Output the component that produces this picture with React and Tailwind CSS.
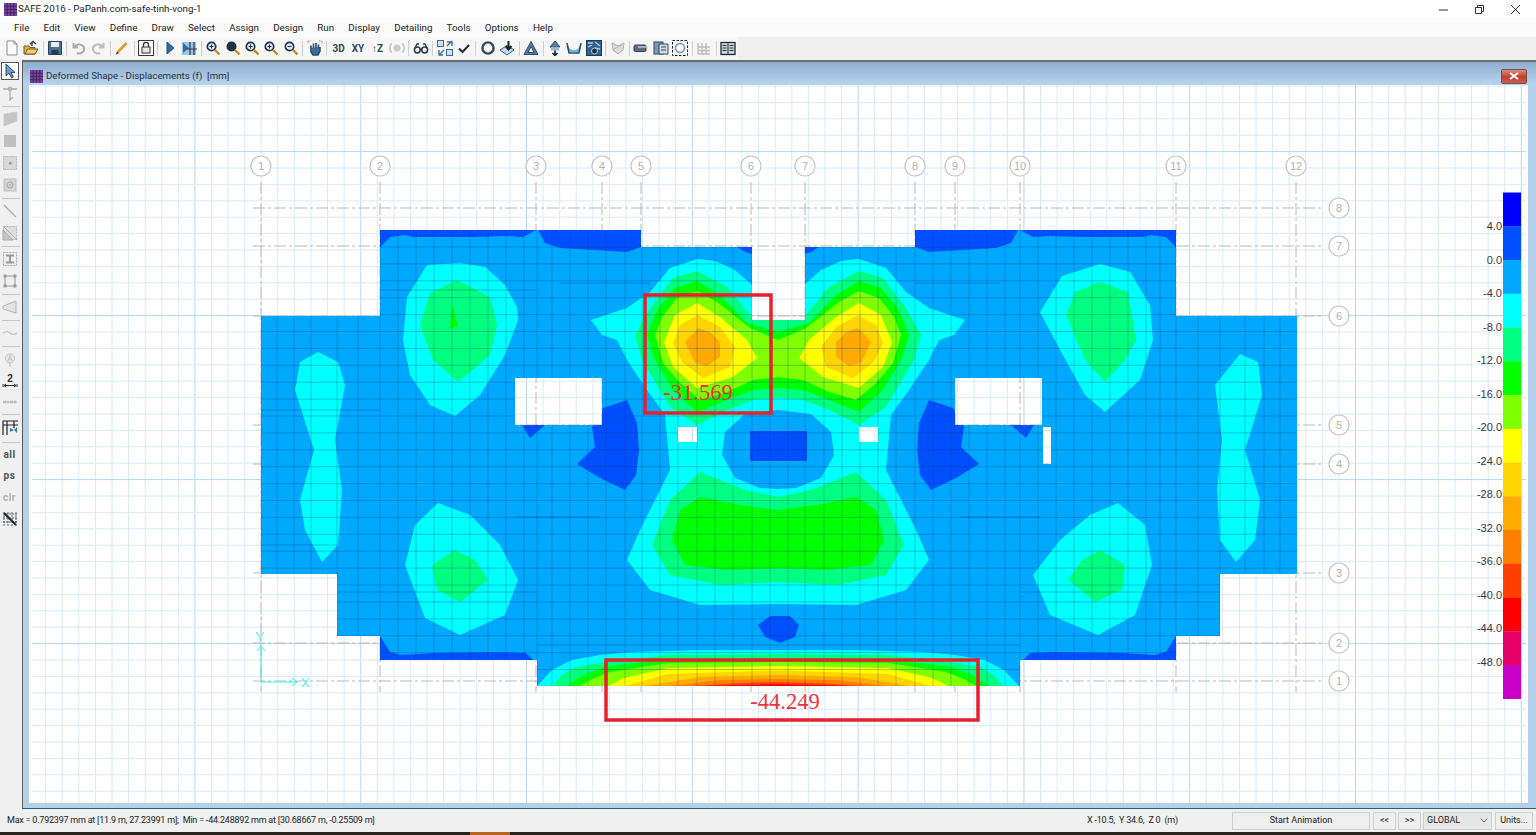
const uiFont = { fontFamily: "Roboto, 'Liberation Sans', sans-serif" };

const C = {
  blue: '#0050ff',
  slab: '#00a8ff',
  cyan: '#00ffff',
  mint: '#00ff80',
  green: '#00ff00',
  lime: '#80ff00',
  yellow: '#ffff00',
  gold: '#ffd500',
  amber: '#ffaa00',
  orange: '#ff8000',
  tomato: '#ff4000',
  red: '#ff0000',
};

const legendColors = ['#0000ff', '#0050ff', '#00a8ff', '#00ffff', '#00ff80', '#00ff00', '#80ff00', '#ffff00', '#ffd500', '#ffaa00', '#ff8000', '#ff4000', '#ff0000', '#e6006a', '#c800c8'];
const legendLabels = ['4.0', '0.0', '-4.0', '-8.0', '-12.0', '-16.0', '-20.0', '-24.0', '-28.0', '-32.0', '-36.0', '-40.0', '-44.0', '-48.0'];

const menus = ['File', 'Edit', 'View', 'Define', 'Draw', 'Select', 'Assign', 'Design', 'Run', 'Display', 'Detailing', 'Tools', 'Options', 'Help'];

const topBubbles = [['1', 261], ['2', 380], ['3', 536], ['4', 602], ['5', 641], ['6', 751], ['7', 805], ['8', 915], ['9', 955], ['10', 1020], ['11', 1176], ['12', 1296]];
const sideBubbles = [['8', 208], ['7', 246], ['6', 316], ['5', 425], ['4', 464], ['3', 573], ['2', 643], ['1', 681]];

const slabOutline = 'M380 230H641V247H752V320H805V247H915V230H1176V316H1297V574H1220V636H1176V660H1020V686H537V660H380V636H337V574H261V316H380Z';
const holes = 'M515 378H602V425H515ZM955 378H1042V425H955ZM678 427H697V442H678ZM859 427H878V442H859ZM1043 427H1051V464H1043Z';

// contours are drawn on the left half and mirrored around the slab centre
const mx = (pts) => pts.map(([x, y]) => [1556 - x, y]);
const str = (pts) => pts.map((p) => p.join(',')).join(' ');
const both = (pts) => str([...pts, ...mx(pts).reverse()]);

const butterfly = [[778, 300], [752, 285], [735, 270], [715, 261], [697, 259], [670, 268], [650, 292], [627, 308], [591, 320], [602, 335], [617, 340], [627, 360], [647, 390], [665, 415], [670, 470], [640, 530], [627, 560], [650, 590], [700, 605], [778, 604]];
const innerOval = [[778, 410], [745, 414], [725, 432], [722, 455], [735, 478], [760, 488], [778, 489]];
const upper = [
  [C.mint, [[778, 320], [752, 317], [727, 287], [697, 271], [673, 278], [650, 308], [635, 335], [642, 360], [670, 407], [697, 425], [727, 410], [753, 400], [778, 398]]],
  [C.green, [[778, 332], [747, 323], [720, 295], [697, 281], [675, 288], [657, 310], [647, 335], [655, 360], [673, 390], [697, 412], [727, 400], [753, 390], [778, 388]]],
  [C.lime, [[778, 340], [750, 328], [717, 302], [697, 291], [677, 298], [662, 317], [655, 335], [663, 363], [680, 383], [700, 400], [727, 392], [753, 380], [778, 377]]],
];
const yellowLobe = [[697, 303], [675, 315], [664, 342], [673, 367], [697, 388], [733, 377], [757, 358], [747, 340], [720, 317]];
const goldLobe = [[698, 315], [680, 325], [673, 343], [682, 362], [703, 378], [730, 367], [735, 347], [720, 327]];
const amberLobe = [[698, 328], [685, 342], [695, 363], [707, 366], [720, 357], [720, 342], [710, 332]];

const lower = [
  [C.mint, [[778, 497], [745, 490], [700, 472], [670, 500], [652, 545], [670, 575], [720, 585], [778, 582]]],
  [C.green, [[778, 510], [740, 505], [700, 497], [680, 510], [672, 540], [685, 565], [730, 570], [778, 568]]],
];

const arches = [
  [C.cyan, [[537, 686], [552, 670], [572, 660], [600, 655], [633, 652], [700, 650], [778, 650]]],
  [C.mint, [[553, 686], [562, 675], [576, 667], [604, 662], [668, 655], [778, 654]]],
  [C.green, [[567, 686], [582, 676], [604, 667], [668, 659], [778, 658]]],
  [C.lime, [[580, 686], [592, 679], [610, 672], [668, 663], [778, 662]]],
  [C.yellow, [[608, 686], [624, 678], [668, 668], [778, 666]]],
  [C.gold, [[625, 686], [668, 674], [778, 670.5]]],
  [C.amber, [[645, 686], [700, 677], [778, 675]]],
  [C.orange, [[668, 686], [720, 680], [778, 679]]],
  [C.tomato, [[690, 686], [740, 683], [778, 682]]],
  [C.red, [[705, 686], [760, 684.5], [778, 684]]],
];

const lobes = [
  // upper side lobes
  [C.cyan, [[427, 265], [460, 263], [485, 267], [505, 285], [517, 307], [518, 320], [505, 355], [480, 395], [455, 416], [430, 405], [410, 375], [403, 340], [407, 297]]],
  [C.mint, [[430, 293], [457, 280], [490, 297], [497, 325], [490, 355], [458, 382], [433, 360], [420, 325]]],
  [C.green, [[452, 305], [458, 326], [450, 329]]],
  [C.cyan, [[1062, 276], [1100, 264], [1130, 272], [1150, 305], [1153, 340], [1140, 380], [1105, 412], [1085, 395], [1060, 350], [1040, 312]]],
  [C.mint, [[1075, 292], [1100, 282], [1128, 292], [1136, 340], [1125, 360], [1105, 382], [1085, 360], [1066, 315]]],
  // edge strips
  [C.cyan, [[318, 352], [338, 362], [345, 385], [335, 440], [342, 490], [338, 545], [322, 562], [305, 530], [300, 500], [314, 450], [295, 390], [300, 362]]],
  [C.cyan, [[1240, 354], [1258, 362], [1262, 395], [1245, 450], [1260, 500], [1255, 540], [1236, 562], [1220, 540], [1217, 490], [1222, 440], [1215, 385]]],
  // lower side lobes
  [C.cyan, [[438, 503], [470, 515], [500, 545], [518, 580], [505, 615], [460, 635], [425, 618], [405, 565], [415, 525]]],
  [C.mint, [[455, 550], [475, 560], [488, 580], [460, 602], [437, 590], [432, 565]]],
  [C.cyan, [[1118, 503], [1145, 525], [1152, 565], [1135, 615], [1098, 635], [1050, 615], [1033, 575], [1060, 540], [1090, 515]]],
  [C.mint, [[1100, 550], [1125, 565], [1122, 590], [1095, 602], [1068, 580], [1082, 560]]],
];

const deepBlue = [
  [[758, 625], [770, 616], [790, 616], [799, 625], [795, 637], [780, 643], [765, 637]],
  [[750, 431], [807, 431], [807, 461], [750, 461]],
];

// these sit apart on each side, so each one is drawn twice instead of joined across the centre
const sidePatches = [
  [[603, 408], [627, 400], [637, 423], [639, 450], [636, 475], [625, 490], [600, 478], [577, 464], [595, 447], [592, 427]],
  [[522, 425], [545, 425], [530, 438]],
  [[380, 230], [536, 230], [523, 237], [507, 236], [473, 237], [413, 237], [405, 235], [390, 237], [380, 247]],
  [[538, 230], [641, 230], [641, 247], [627, 252], [560, 248], [545, 243]],
  [[737, 247], [752, 247], [752, 254], [745, 252]],
  [[380, 636], [380, 660], [533, 660], [526, 653], [504, 652], [433, 653], [401, 655], [390, 652]],
];

function range(from, to, step = 1) {
  const out = [];
  for (let v = from; v <= to; v += step) out.push(v);
  return out;
}

const gridX = range(0, 89).map((i) => 45.7 + i * 16.58);
const gridY = range(0, 43).map((i) => 86 + i * 16.4);
const meshX = [261, 277, 294, 311, 337, 358, 380, 398, 416, 434, 452, 470, 488, 506, 524, 537, 552, 570, 588, 606, 625, 642, 660, 678, 697, 715, 733, 752, 770, 788, 805, 824, 842, 860, 878, 896, 915, 933, 951, 969, 987, 1005, 1020, 1038, 1056, 1074, 1092, 1110, 1128, 1146, 1160, 1176, 1198, 1220, 1245, 1264, 1280];
const meshY = range(0, 26).map((i) => 247 + i * 16.9);
const meshStubs = [[380, 290, 536, 290], [560, 283, 650, 283], [915, 283, 1000, 283], [337, 592, 537, 592], [1020, 592, 1220, 592], [261, 545, 337, 545], [515, 517, 600, 517], [960, 517, 1040, 517], [537, 645, 1020, 645], [815, 240, 900, 240], [261, 410, 380, 410]];

function Plot() {
  return (
    <svg className="block" width="1499" height="718" viewBox="29 85 1499 718">
      <defs>
        <clipPath id="slab">
          <path d={`${slabOutline}${holes}`} clipRule="evenodd" />
        </clipPath>
      </defs>
      <rect x="29" y="85" width="1499" height="718" fill="#fff" />

      {gridX.map((x, i) => (
        <line key={x} x1={x} x2={x} y1="85" y2="803" stroke={i % 10 === 9 ? '#b4d6f8' : '#d8eafc'} />
      ))}
      {gridY.map((y, i) => (
        <line key={y} x1="32" x2="1526" y1={y} y2={y} stroke={i % 10 === 4 ? '#b4d6f8' : '#d8eafc'} />
      ))}

      {sideBubbles.map(([n, y]) => (
        <line key={n} x1="253" x2="1322" y1={y} y2={y} stroke="#b9b9b9" strokeDasharray="12 3 3 3" />
      ))}
      {topBubbles.map(([n, x]) => (
        <line key={n} x1={x} x2={x} y1="182" y2="692" stroke="#b9b9b9" strokeDasharray="12 3 3 3" />
      ))}

      <g clipPath="url(#slab)">
        <rect x="255" y="225" width="1050" height="465" fill={C.slab} />
        {sidePatches.map((p, i) => (
          <g key={i}>
            <polygon points={str(p)} fill={C.blue} />
            <polygon points={str(mx(p))} fill={C.blue} />
          </g>
        ))}
        {lobes.map(([c, p], i) => <polygon key={i} points={str(p)} fill={c} />)}
        {arches.map(([c, p]) => <polygon key={c} points={both(p)} fill={c} />)}
        <polygon points={both(butterfly)} fill={C.cyan} />
        <polygon points={both(innerOval)} fill={C.slab} />
        {lower.map(([c, p]) => <polygon key={c} points={both(p)} fill={c} />)}
        {upper.map(([c, p]) => <polygon key={c} points={both(p)} fill={c} />)}
        {[yellowLobe, mx(yellowLobe)].map((p, i) => <polygon key={i} points={str(p)} fill={C.yellow} />)}
        {[goldLobe, mx(goldLobe)].map((p, i) => <polygon key={i} points={str(p)} fill={C.gold} />)}
        {[amberLobe, mx(amberLobe)].map((p, i) => <polygon key={i} points={str(p)} fill={C.amber} />)}
        {deepBlue.map((p, i) => <polygon key={i} points={str(p)} fill={C.blue} />)}

        {meshX.map((x) => <line key={x} x1={x} x2={x} y1="225" y2="690" stroke="#00386e" strokeOpacity="0.28" />)}
        {meshY.map((y) => <line key={y} x1="255" x2="1305" y1={y} y2={y} stroke="#00386e" strokeOpacity="0.28" />)}
        {meshStubs.map(([a, b, c, d], i) => <line key={i} x1={a} y1={b} x2={c} y2={d} stroke="#00386e" strokeOpacity="0.3" />)}
      </g>

      {topBubbles.map(([n, x]) => (
        <g key={n}>
          <circle cx={x} cy="166" r="10" fill="#fff" stroke="#c4c4c4" strokeWidth="1.2" />
          <text x={x} y="170" textAnchor="middle" fontSize="11" fill="#b0b0b0" fontFamily="'Liberation Sans', sans-serif">{n}</text>
        </g>
      ))}
      {sideBubbles.map(([n, y]) => (
        <g key={n}>
          <circle cx="1339" cy={y} r="10" fill="#fff" stroke="#c4c4c4" strokeWidth="1.2" />
          <text x="1339" y={y + 4} textAnchor="middle" fontSize="11" fill="#b0b0b0" fontFamily="'Liberation Sans', sans-serif">{n}</text>
        </g>
      ))}

      {/* local axes */}
      <g stroke="#2ff2f2" fill="none" strokeWidth="1">
        <path d="M261 682H297M292 678L297 682L292 686M261 682V646M257 651L261 646L265 651" />
        <path d="M302 678L309 687M309 678L302 687M256 632L260 637L264 632M260 637V642" />
      </g>

      {/* legend */}
      {legendColors.map((c, i) => (
        <rect key={c} x="1503" y={192.5 + i * 33.75} width="18" height="34" fill={c} />
      ))}
      {legendLabels.map((l, i) => (
        <text key={l} x="1502" y={230 + i * 33.5} textAnchor="end" fontSize="11" fill="#3a3a3a" fontFamily="'Liberation Sans', sans-serif">{l}</text>
      ))}

      {/* annotations */}
      <rect x="645" y="295" width="126" height="118" fill="none" stroke="#e8202c" strokeWidth="3.5" />
      <rect x="606" y="660" width="372" height="60" fill="none" stroke="#e8202c" strokeWidth="3.5" />
      <text x="698" y="400" textAnchor="middle" fontSize="22.5" fill="#e6303a" fontFamily="'Liberation Serif', serif">-31.569</text>
      <text x="785" y="709" textAnchor="middle" fontSize="22.5" fill="#ee3340" fontFamily="'Liberation Serif', serif">-44.249</text>
    </svg>
  );
}

function GridLogo({ size = 14 }) {
  return (
    <svg width={size} height={size} viewBox="0 0 14 14" className="shrink-0">
      <rect width="14" height="14" fill="#7d3fa5" />
      <path d="M3.5 0V14M7 0V14M10.5 0V14M0 3.5H14M0 7H14M0 10.5H14" stroke="#3f2a58" strokeWidth="1" />
    </svg>
  );
}

const g = '#a9a9a9';
const dk = '#33485c';

function Mag({ c = '#1f3347', sign }) {
  return (
    <>
      <circle cx="6.5" cy="6.5" r="4.2" fill={sign === 'fill' ? '#1f3347' : '#e8f0f8'} stroke={c} strokeWidth="1.7" />
      <path d="M9.8 9.8L14.5 14.5" stroke="#c98a1e" strokeWidth="2.4" />
      {(sign === '+' || sign === 'z') && <path d="M4.5 6.5H8.5M6.5 4.5V8.5" stroke={c} strokeWidth="1.2" />}
      {sign === '-' && <path d="M4.5 6.5H8.5" stroke={c} strokeWidth="1.2" />}
    </>
  );
}

const toolIcons = {
  doc: <path d="M3 1H10L13 4V15H3Z M10 1V4H13" fill="#fbfbfb" stroke="#8a8f96" />,
  open: <><path d="M1 6H6L7 7.5H12V14H1Z" fill="#e2b24a" stroke="#7a5a1c" /><path d="M2 14L4.5 9H15L12 14Z" fill="#f4cf74" stroke="#7a5a1c" /><path d="M9 6V2.5M7 4L10 1.5L13 4" stroke="#27425c" strokeWidth="1.4" fill="none" /></>,
  save: <><path d="M1.5 1.5H14.5V14.5H1.5Z" fill="#4d7098" stroke="#27425c" /><rect x="4" y="2" width="8" height="5" fill="#e8edf3" /><rect x="4.5" y="10" width="7" height="4.5" fill="#24384e" /></>,
  undo: <path d="M4 6.5A5 4.5 0 1 1 6 13M2.5 3V7.5H7" fill="none" stroke={g} strokeWidth="2" />,
  redo: <path d="M12 6.5A5 4.5 0 1 0 10 13M13.5 3V7.5H9" fill="none" stroke="#bcbcbc" strokeWidth="2" />,
  pencil: <><path d="M3 13L12.5 3" stroke="#e49a22" strokeWidth="2.6" /><path d="M1.5 15L3.2 11.8L4.6 13.2Z" fill="#333" /></>,
  lock: <><rect x="0.5" y="0.5" width="15" height="15" fill="#f8f8f8" stroke="#3a3a3a" /><path d="M5.5 7V4.8A2.5 2.5 0 0 1 10.5 4.8V7" fill="none" stroke="#333" strokeWidth="1.3" /><rect x="4" y="7" width="8" height="6" fill="#e6e6e6" stroke="#333" /></>,
  play: <path d="M5 2L12 8L5 14Z" fill="#2f6e9e" stroke="#24507a" />,
  runall: <><rect x="1" y="2" width="14" height="13" fill="#9fc4e0" /><path d="M2 3L8 8L2 13Z" fill="#2f6e9e" /><path d="M9 2V15M13 2V15M6 9H16" stroke="#24384e" strokeWidth="1.2" /></>,
  z1: <Mag sign="z" />,
  z2: <Mag sign="fill" />,
  z3: <Mag sign="+" />,
  z4: <Mag sign="+" />,
  z5: <Mag sign="-" />,
  hand: <><path d="M4 9V5.5M6.5 8V3.5M9 8V3M11.5 8.5V4.5M4 8L4 12L6 15H11L13 11V7" fill="#3f6c96" stroke="#2c4d6e" strokeWidth="1.6" /><path d="M1 1H4M12 1H15M1 1V4M15 1V4" stroke="#999" strokeDasharray="1.5 1" /></>,
  orbit: <><circle cx="8" cy="8" r="3.5" fill="#ccc" /><path d="M2.5 3.5A7 7 0 0 0 2.5 12.5M13.5 3.5A7 7 0 0 1 13.5 12.5" fill="none" stroke="#bbb" strokeWidth="1.4" /></>,
  glasses: <><circle cx="4.3" cy="10" r="2.9" fill="none" stroke="#2c3a48" strokeWidth="1.5" /><circle cx="11.7" cy="10" r="2.9" fill="none" stroke="#2c3a48" strokeWidth="1.5" /><path d="M7 9.5H9M1.5 9L4 4H6M14.5 9L12 4H10" fill="none" stroke="#2c3a48" strokeWidth="1.3" /></>,
  arrows: <><rect x="0.5" y="0.5" width="6" height="6" fill="#cfe2f4" stroke="#3a6a98" /><rect x="9.5" y="9.5" width="6" height="6" fill="#cfe2f4" stroke="#3a6a98" /><path d="M10 6L15 1M7 10L2 15M10 2H15V6M2 10V15H6" fill="none" stroke="#3a6a98" strokeWidth="1.3" /></>,
  check: <path d="M3 8.5L6.5 12L13 5" fill="none" stroke="#1f2a36" strokeWidth="2" />,
  ring: <circle cx="8" cy="8" r="5.6" fill="none" stroke={dk} strokeWidth="2.4" />,
  drop: <><path d="M1 10L8 5.5L15 10L8 15Z" fill="#c2d8ec" stroke="#3f5f80" /><path d="M9.5 1V8M6.5 6L9.5 9.5L12.5 6" fill="none" stroke="#18222c" strokeWidth="2" /></>,
  tri: <path d="M8 1.5L15 14.5H1ZM8 6.5L11 12.5H5Z" fill="#517a9e" fillRule="evenodd" stroke="#2c4d6e" />,
  up: <><path d="M8 1L13 7H3Z" fill="#5e7f9e" stroke="#2c4d6e" /><rect x="4" y="7" width="8" height="3.5" fill="#9bb8d2" /><path d="M8 10.5V15M5.5 13L8 15.5L10.5 13" stroke="#18222c" strokeWidth="1.6" fill="none" /></>,
  bowl: <><path d="M2 5C4 12 12 12 14 5L14 12H2Z" fill="#66b6de" /><path d="M1 3L3 13H13L15 3" fill="none" stroke="#2c4d6e" strokeWidth="1.5" /></>,
  photo: <><rect x="0.5" y="0.5" width="15" height="15" fill="#33608a" stroke="#1e3b56" /><path d="M2 3H7M9 2L14 6M2 7L6 5M9 8L14 9" stroke="#a8d0ee" strokeWidth="1.3" /><circle cx="8.5" cy="11" r="3" fill="#163047" stroke="#a8d0ee" /></>,
  bowlg: <><path d="M2 3L8 6L14 3L13 10L8 14L3 10Z" fill="#dcdcdc" stroke="#b0b0b0" /><path d="M4 9L12 5" stroke="#b5b5b5" /></>,
  beam: <><rect x="1" y="5" width="12" height="6.5" rx="1.5" fill="#5d6f80" stroke="#2c3a48" /><path d="M5 7H15" stroke="#c6d4e0" strokeWidth="1.3" /></>,
  stack: <><rect x="1" y="2" width="9" height="12" fill="#7d97ad" stroke="#33485c" /><path d="M6 4H15V14H6Z" fill="#cfdce8" stroke="#33485c" /><path d="M8 7H13M8 10H13" stroke="#33485c" /></>,
  dots: <><rect x="0.5" y="0.5" width="15" height="15" fill="#fafafa" stroke="#222" strokeDasharray="2.5 1.5" /><circle cx="8" cy="8" r="4.5" fill="none" stroke="#6f97bd" strokeWidth="1.5" /></>,
  gridg: <path d="M2 3V14H14M6 3V14M10 3V14M2 7H14M2 10.5H14" fill="none" stroke="#bdbdbd" strokeWidth="1.4" />,
  book: <><rect x="1" y="2.5" width="14" height="12" fill="#cfd6dc" stroke="#1f2a36" strokeWidth="1.3" /><path d="M8 2.5V14.5M2.5 5.5H6.5M2.5 8H6.5M2.5 10.5H6.5M9.5 5.5H13.5M9.5 8H13.5M9.5 10.5H13.5" stroke="#1f2a36" /></>,
};

const toolbar = ['doc', 'open', '|', 'save', '|', 'undo', 'redo', '|', 'pencil', '|', 'lock', '|', 'play', 'runall', '|', 'z1', 'z2', 'z3', 'z4', 'z5', '|', 'hand', '|', '3D', 'XY', '↑Z', 'orbit', '|', 'glasses', '|', 'arrows', 'check', '|', 'ring', 'drop', '|', 'tri', '|', 'up', 'bowl', 'photo', '|', 'bowlg', '|', 'beam', 'stack', 'dots', '|', 'gridg', '|', 'book'];

const sideIcons = {
  arrow: <path d="M4 1V13L7 10L9.5 15L11.5 14L9 9.5H13Z" fill="#6f9cc4" stroke="#2c4d6e" />,
  node: <><circle cx="8" cy="4" r="2" fill="none" stroke="#aaa" /><path d="M1 4H15M8 6V15L11 12" stroke="#aaa" fill="none" strokeWidth="1.3" /></>,
  quad: <path d="M2 3L15 1V10L2 15Z" fill="#c4c4c4" stroke="#cfcfcf" />,
  square: <rect x="2" y="2" width="12" height="12" fill="#c0c0c0" />,
  dashdot: <><rect x="1.5" y="1.5" width="13" height="13" fill="#d8d8d8" stroke="#b5b5b5" strokeDasharray="2 1" /><rect x="7" y="7" width="2.5" height="2.5" fill="#999" /></>,
  sqcirc: <><rect x="2" y="2" width="12" height="12" fill="#d4d4d4" stroke="#c0c0c0" /><circle cx="8" cy="8" r="3" fill="none" stroke="#a5a5a5" /><circle cx="8" cy="8" r="0.8" fill="#999" /></>,
  diag: <path d="M2 2L14 14" stroke="#b0b0b0" strokeWidth="1.5" />,
  diagbox: <><rect x="1.5" y="1.5" width="13" height="13" fill="#dedede" stroke="#b5b5b5" strokeDasharray="2 1" /><path d="M1 5L11 15H1ZM2 2L15 15" fill="#c4c4c4" stroke="#aaa" /></>,
  ibeam: <><rect x="1.5" y="1.5" width="13" height="13" fill="#ededed" stroke="#aaa" strokeDasharray="2 1" /><path d="M4 3.5H12V5.5H9V10.5H12V12.5H4V10.5H7V5.5H4Z" fill="#999" /></>,
  nodes: <><rect x="3" y="3" width="10" height="10" fill="none" stroke="#aaa" strokeWidth="1.3" /><rect x="1.5" y="1.5" width="3" height="3" fill="#999" /><rect x="11.5" y="1.5" width="3" height="3" fill="#999" /><rect x="1.5" y="11.5" width="3" height="3" fill="#999" /><rect x="11.5" y="11.5" width="3" height="3" fill="#999" /></>,
  trap: <path d="M1 7L14 2V14L1 10Z" fill="#e2e2e2" stroke="#b5b5b5" />,
  wave: <path d="M1 8C4 6 6 6 8 8S12 10 15 8" fill="none" stroke="#c4c4c4" strokeWidth="1.3" />,
  circleA: <><circle cx="8" cy="6.5" r="4.5" fill="#e8e8e8" stroke="#c0c0c0" /><path d="M6 9L8 3.5L10 9M6.8 7.2H9.2M8 11V15" fill="none" stroke="#c0c0c0" /></>,
  dim: <><text x="8" y="8" textAnchor="middle" fontSize="10" fontWeight="700" fill="#333" fontFamily="'Liberation Sans', sans-serif">2</text><path d="M1 13V10M15 13V10M2 11.5H14M2 11.5L4 10M2 11.5L4 13M14 11.5L12 10M14 11.5L12 13" fill="none" stroke="#333" /></>,
  dash: <path d="M1 8H15" stroke="#bcbcbc" strokeWidth="2.5" strokeDasharray="3 .5" />,
  snap: <><path d="M1 15V1H16M5 1V15M12 1V8M1 5H16" fill="none" stroke="#222" strokeWidth="1.2" /><path d="M8 8L12 10L8 12ZM15 7V13L12 10Z" fill="#3a78ac" /></>,
  cross: <><path d="M2 1V15M6 1V15M10 1V15M14 1V15M1 3H15M1 7H15M1 11H15" stroke="#50606e" strokeDasharray="2 1" /><path d="M2 2L14 14" stroke="#222" strokeWidth="1.8" /></>,
};

const leftbar = [
  ['arrow', 22, true], ['node', 22], ['-', 4], ['quad', 22], ['square', 22], ['dashdot', 22], ['sqcirc', 22], ['-', 4], ['diag', 22], ['diagbox', 22], ['-', 4], ['ibeam', 22], ['nodes', 22], ['-', 4], ['trap', 22], ['-', 4], ['wave', 22], ['-', 4], ['circleA', 24], ['dim', 20], ['dash', 20], ['-', 4], ['snap', 24], ['-', 3], ['all', 21], ['ps', 21], ['clr', 22], ['cross', 22],
];

function LeftToolbar() {
  return (
    <div className="flex w-[22px] shrink-0 flex-col bg-[#f0f0f0]">
      {leftbar.map(([name, h, active], i) => {
        if (name === '-') {
          return (
            <div key={i} className="flex h-[4px] items-center px-[2px]">
              <div className="h-px w-full bg-[#c8c8c8]" />
            </div>
          );
        }
        if (name === 'all' || name === 'ps' || name === 'clr') {
          return (
            <div key={i} style={{ height: h }} className={`flex w-[19px] items-center justify-center text-[10px] font-bold tracking-[0.5px] ${name === 'clr' ? 'text-[#b0b0b0]' : 'text-[#4a5660]'}`}>
              {name}
            </div>
          );
        }
        return (
          <div key={i} style={{ height: h }} className="flex w-[19px] items-center justify-center">
            <div className={active ? 'flex items-center justify-center border border-[#555] bg-white' : 'flex items-center justify-center'}>
              <svg width="16" height="16" viewBox="0 0 16 16">{sideIcons[name]}</svg>
            </div>
          </div>
        );
      })}
    </div>
  );
}

function TopToolbar() {
  return (
    <div className="flex h-[23px] shrink-0 bg-[#f0f0f0]">
      <div className="flex h-[22px] w-[738px] items-center bg-[#f6f6f6] pl-[2px]">
        {toolbar.map((name, i) => {
          if (name === '|') {
            return (
              <div key={i} className="flex h-full w-[4.4px] items-center justify-center">
                <div className="h-[15px] w-px bg-[#cfcfcf]" />
              </div>
            );
          }
          if (name === '3D' || name === 'XY' || name === '↑Z') {
            return (
              <div key={i} className="flex w-[19.5px] justify-center text-[10px] font-bold text-[#33485c]">{name}</div>
            );
          }
          return (
            <div key={i} className="flex w-[19.5px] justify-center">
              <svg width="16" height="16" viewBox="0 0 16 16">{toolIcons[name]}</svg>
            </div>
          );
        })}
      </div>
    </div>
  );
}

export default function App() {
  return (
    <div style={uiFont} className="flex h-[835px] w-[1536px] flex-col overflow-hidden bg-[#f0f0f0] text-[#1a1a1a]">
      {/* title bar */}
      <div className="flex h-[18px] shrink-0 items-center bg-white pl-[4px]">
        <GridLogo size={13} />
        <span className="ml-[1px] text-[9.8px] text-[#222]">SAFE 2016 - PaPanh.com-safe-tinh-vong-1</span>
        <div className="ml-auto flex items-center text-[#333]">
          <svg className="mr-[27px]" width="9" height="9" viewBox="0 0 9 9"><path d="M0 5H9" stroke="#333" /></svg>
          <svg className="mr-[27px]" width="9" height="9" viewBox="0 0 9 9"><path d="M.5 2.5H6.5V8.5H.5ZM2.5 2.5V.5H8.5V6.5H6.5" fill="none" stroke="#333" /></svg>
          <svg className="mr-[16px]" width="9" height="9" viewBox="0 0 9 9"><path d="M0 0L9 9M9 0L0 9" stroke="#333" /></svg>
        </div>
      </div>

      {/* menu bar */}
      <div className="flex h-[19px] shrink-0 items-center gap-[14.2px] bg-[#fafafa] pt-[2px] pl-[14px] text-[9.8px] text-[#222]">
        {menus.map((m) => <span key={m}>{m}</span>)}
      </div>

      <TopToolbar />

      <div className="flex h-[749px] shrink-0">
        <LeftToolbar />
        {/* child window */}
        <div className="flex min-w-0 flex-1 flex-col border-t-2 border-l border-t-[#6e6e6e] border-l-[#5c5c5c] bg-[#b4d0ea]">
          <div className="flex h-[23px] shrink-0 items-center bg-gradient-to-b from-[#8fadce] to-[#b9d4ee] pt-[5px] pr-[9px] pl-[7px]">
            <GridLogo size={13} />
            <span className="ml-[3px] text-[9.7px] text-[#22303c]">Deformed Shape - Displacements (f)&nbsp; [mm]</span>
            <div className="ml-auto flex h-[15px] w-[26px] items-center justify-center rounded-[2px] border border-[#7a4a4a] bg-gradient-to-b from-[#d98b7c] via-[#c2402c] to-[#c9604f]">
              <svg width="10" height="8" viewBox="0 0 10 8"><path d="M1 1L9 7M9 1L1 7" stroke="#fff" strokeWidth="2" /></svg>
            </div>
          </div>
          <div className="flex flex-1 pr-[8px] pl-[6px]">
            <div className="h-[718px]">
              <Plot />
            </div>
          </div>
          <div className="h-px bg-[#2f5f6e]" />
        </div>
      </div>

      {/* status bar */}
      <div className="flex h-[23px] shrink-0 items-center bg-[#f0f0f0] pl-[7px] text-[9px] text-[#222]">
        <span className="w-[1080px] tracking-[-0.22px]">Max = 0.792397 mm at [11.9 m, 27.23991 m];&nbsp; Min = -44.248892 mm at [30.68667 m, -0.25509 m]</span>
        <span className="w-[145px] tracking-[-0.22px]">X -10.5,&nbsp; Y 34.6,&nbsp; Z 0&nbsp; (m)</span>
        <div className="flex h-[18px] w-[138px] items-center justify-center border border-[#cfcfcf] bg-[#efefef]">Start Animation</div>
        <div className="ml-[3px] flex h-[18px] w-[23px] items-center justify-center border border-[#cfcfcf] bg-[#efefef]">&lt;&lt;</div>
        <div className="ml-[2px] flex h-[18px] w-[23px] items-center justify-center border border-[#cfcfcf] bg-[#efefef]">&gt;&gt;</div>
        <div className="ml-[2px] flex h-[18px] w-[69px] items-center justify-between border border-[#cfcfcf] bg-[#e6e6e6] px-[3px]">
          GLOBAL
          <svg width="8" height="5" viewBox="0 0 8 5"><path d="M.5 .5L4 4L7.5 .5" fill="none" stroke="#666" /></svg>
        </div>
        <div className="ml-[3px] flex h-[18px] w-[38px] items-center justify-center border border-[#cfcfcf] bg-[#efefef]">Units...</div>
      </div>

      {/* taskbar sliver */}
      <div className="flex h-[3px] shrink-0 bg-[#2a241f]">
        <div className="ml-[470px] w-[40px] bg-[#b5651d]" />
      </div>
    </div>
  );
}
